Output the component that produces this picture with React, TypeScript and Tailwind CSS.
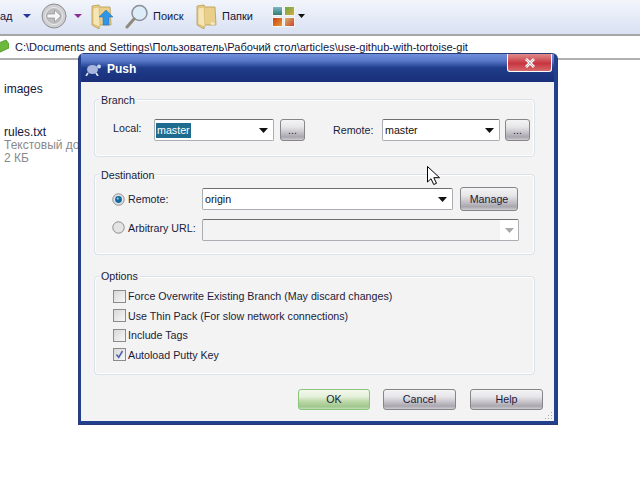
import React from "react";

const btn = "flex items-center justify-center rounded-[3px] border border-[#85858a] bg-[linear-gradient(#f4f4f5_0%,#e6e5e8_35%,#c9c7cd_60%,#a9a6ae_85%,#cfced2_100%)] text-[10.7px] text-[#1b1b3a]";

function Combo({ text, selected, className }: { text: string; selected?: boolean; className: string }) {
  return (
    <div className={`flex h-[22px] items-center justify-between rounded-[2px] border border-[#abadb3] border-t-[#6f6f6f] bg-white pl-[1px] pr-[3px] ${className}`}>
      <span className={selected ? "mt-[1px] bg-[#1f6a8f] px-[1px] leading-[15px] text-white" : "mt-[1px] px-[1px] text-[#111]"}>{text}</span>
      <svg width="9" height="5" viewBox="0 0 9 5" className="mr-[2px]"><path d="M0 0h9L4.5 5z" fill="#111" /></svg>
    </div>
  );
}

function Group({ title, className, legendClass, children }: { title: string; className: string; legendClass: string; children: React.ReactNode }) {
  return (
    <div className={`relative ml-[13px] w-[441px] rounded-[4px] border border-[#dbe1e8] shadow-[inset_0_0_0_1px_#fff] ${className}`}>
      <span className={`absolute left-[4px] bg-[#f3f3f3] px-[2px] leading-[14px] text-[#1b1b3a] ${legendClass}`}>{title}</span>
      {children}
    </div>
  );
}

function Radio({ on }: { on?: boolean }) {
  return (
    <svg width="13" height="13" viewBox="0 0 13 13" className="shrink-0">
      <circle cx="6.5" cy="6.5" r="5.7" fill="#e4e4e4" stroke="#8b8b8b" />
      {on && <circle cx="6.5" cy="6.5" r="3.4" fill="#146a9f" />}
      {on && <circle cx="5.8" cy="5.6" r="1.1" fill="#8cc8ea" />}
    </svg>
  );
}

function Check({ label, on }: { label: string; on?: boolean }) {
  return (
    <div className="flex h-[13px] items-center gap-[2px]">
      <div className="flex h-[13px] w-[13px] shrink-0 items-center justify-center border border-[#8b8b8b] bg-[linear-gradient(135deg,#d8d8d8,#f7f7f7)]">
        {on && (
          <svg width="9" height="9" viewBox="0 0 9 9"><path d="M1.5 4.5 L3.7 7.5 L7.5 1" fill="none" stroke="#4a60ac" strokeWidth="1.5" /></svg>
        )}
      </div>
      <span className="whitespace-nowrap text-[#1b1b3a]">{label}</span>
    </div>
  );
}

function Folder({ arrow }: { arrow?: boolean }) {
  return (
    <svg width="22" height="25" viewBox="0 0 22 25">
      <path d="M1 2 L8 1 L9 3 L19 3 L20 21 L8 21 L8 25 L1 21 Z" fill="#e9cf8a" stroke="#b99a4f" strokeWidth="0.8" />
      <path d="M2 4 L8 3 L9 23 L2 20 Z" fill="#f6e6b6" stroke="#c7a860" strokeWidth="0.5" />
      {arrow ? (
        <path d="M15 6 L22 13 L18 13 L18 21 L12 21 L12 13 L8 13 Z" fill="#2f95e6" stroke="#1b6fc0" strokeWidth="0.5" />
      ) : (
        <path d="M16 21v-3M18 21v-2" stroke="#fff" strokeWidth="1" />
      )}
    </svg>
  );
}

export default function App() {
  return (
    <div className="relative h-[480px] w-[640px] overflow-hidden bg-white font-['Liberation_Sans',sans-serif] text-[10.7px] text-[#111]">
      <div className="flex h-[36px] items-center border-b-2 border-[#a6a6a6] bg-[linear-gradient(#f2f5fb,#d9e1f3)] pb-[2px] text-[#14143a]">
        <span className="w-[23px] text-[11px]">ад</span>
        <svg width="8" height="4" viewBox="0 0 8 4"><path d="M0 0h8L4 4z" fill="#23359e" /></svg>
        <svg width="26" height="26" viewBox="0 0 26 26" className="ml-[10px]">
          <circle cx="13" cy="13" r="12" fill="#cfcfd1" stroke="#8f8f93" />
          <circle cx="13" cy="13" r="8.5" fill="#bdbdc0" stroke="#ececed" />
          <path d="M6 11h7.5V7l6.5 6-6.5 6v-4H6z" fill="#f6f6f6" stroke="#8f8f93" strokeWidth="0.7" />
        </svg>
        <svg width="8" height="4" viewBox="0 0 8 4" className="ml-[7px]"><path d="M0 0h8L4 4z" fill="#8b2f93" /></svg>
        <div className="ml-[9px]"><Folder arrow /></div>
        <svg width="24" height="25" viewBox="0 0 24 25" className="ml-[12px]">
          <circle cx="14.5" cy="9" r="7.5" fill="#dcecf8" stroke="#8a8f99" strokeWidth="1.5" />
          <path d="M9 15 L2 23" stroke="#8f8a7c" strokeWidth="3" strokeLinecap="round" />
        </svg>
        <span className="ml-[4px] w-[32px] text-[11px]">Поиск</span>
        <div className="ml-[11px]"><Folder /></div>
        <span className="ml-[4px] w-[32px] text-[11px]">Папки</span>
        <div className="ml-[18px] grid grid-cols-2 gap-[1px]">
          <div className="h-[10px] w-[11px] border border-[#f5f5f5] bg-[linear-gradient(#7fb6c8,#2f7f70)]" />
          <div className="h-[10px] w-[11px] border border-[#f5f5f5] bg-[linear-gradient(135deg,#5fae4a,#e0a63a)]" />
          <div className="h-[10px] w-[11px] border border-[#f5f5f5] bg-[linear-gradient(135deg,#c83a1e,#e89a2a)]" />
          <div className="h-[10px] w-[11px] border border-[#f5f5f5] bg-[linear-gradient(135deg,#d9b26a,#c8452e)]" />
        </div>
        <svg width="7" height="4" viewBox="0 0 7 4" className="ml-[3px]"><path d="M0 0h7L3.5 4z" fill="#111" /></svg>
      </div>
      <div className="flex h-[24px] items-center gap-[6px] border-b-2 border-[#b0b0b0]">
        <svg width="9" height="16" viewBox="0 0 9 16"><path d="M-4 5 L6 1 L9 5 L9 9 L-4 15 Z" fill="#6cb83c" stroke="#3f8a2a" strokeWidth="0.7" /></svg>
        <span className="whitespace-nowrap text-[11.05px] text-[#14143a]">C:\Documents and Settings\Пользователь\Рабочий стол\articles\use-github-with-tortoise-git</span>
      </div>
      <div className="pl-[4px] pt-[23px] text-[12px] leading-[13px] text-[#14143a]">
        <div>images</div>
        <div className="mt-[30px]">rules.txt</div>
        <div className="whitespace-nowrap text-[#8a8a8a]">Текстовый документ</div>
        <div className="text-[#8a8a8a]">2 КБ</div>
      </div>

      <div className="absolute left-[79px] top-[54px] flex h-[370px] w-[478px] flex-col rounded-t-[5px] border-x-[3px] border-b-[3px] border-[#23408f] border-l-[2px] bg-[#f3f3f3] shadow-[0_0_0_1px_#2a3c78]">
        <div className="flex h-[28px] shrink-0 items-center bg-[linear-gradient(#6f8fdb_0%,#5876c8_25%,#1f3c8a_50%,#1a2f7a_100%)] pl-[4px] text-white">
          <svg width="17" height="13" viewBox="0 0 17 13" className="mt-[2px]">
            <ellipse cx="7.5" cy="6.5" rx="5.5" ry="4.5" fill="#a9b6dd" />
            <circle cx="14" cy="3.5" r="2" fill="#c9d3ee" />
            <path d="M3 10 L1 13 M11 10 L13 13" stroke="#e6eaf7" strokeWidth="1.6" />
          </svg>
          <span className="ml-[5px] mt-[2px] text-[12px] font-bold">Push</span>
          <div className="ml-auto mr-[2px] flex h-[18px] w-[45px] self-start items-center justify-center rounded-b-[3px] border-x border-b border-white bg-[linear-gradient(#e08c8c,#c8353f_55%,#d5696c)]">
            <svg width="12" height="10" viewBox="0 0 12 10"><path d="M2 1 L10 9 M10 1 L2 9" stroke="#fff" strokeWidth="2.8" /><path d="M2 1 L10 9 M10 1 L2 9" stroke="#9c8a96" strokeWidth="0.6" /></svg>
          </div>
        </div>

        <Group title="Branch" legendClass="top-[-7px]" className="mt-[17px] h-[58px] shrink-0">
          <div className="flex items-center pl-[18px] pt-[19px]">
            <span className="mb-[4px] w-[41px] text-[#1b1b3a]">Local:</span>
            <Combo text="master" selected className="w-[120px]" />
            <div className={`${btn} ml-[6px] h-[22px] w-[25px]`}>...</div>
            <span className="ml-[28px] w-[49px] text-[#1b1b3a]">Remote:</span>
            <Combo text="master" className="w-[118px]" />
            <div className={`${btn} ml-[5px] h-[22px] w-[25px]`}>...</div>
          </div>
        </Group>

        <Group title="Destination" legendClass="top-[-7px]" className="mt-[17px] h-[81px] shrink-0">
          <div className="flex items-center pl-[17px] pt-[12px]">
            <Radio on />
            <span className="ml-[3px] w-[74px] text-[#1b1b3a]">Remote:</span>
            <Combo text="origin" className="w-[251px]" />
            <div className={`${btn} ml-[7px] h-[24px] w-[58px]`}>Manage</div>
          </div>
          <div className="flex items-center pl-[17px] pt-[8px]">
            <div className="mb-[4px] flex items-center">
              <Radio />
              <span className="ml-[3px] w-[74px] whitespace-nowrap text-[#1b1b3a]">Arbitrary URL:</span>
            </div>
            <div className="flex h-[22px] w-[317px] items-center justify-end rounded-[2px] border border-[#abadb3] border-t-[#6f6f6f] bg-[#f3f3f3]">
              <div className="flex h-[20px] w-[18px] items-center justify-center bg-white">
                <svg width="9" height="5" viewBox="0 0 9 5"><path d="M0 0h9L4.5 5z" fill="#a8a8a8" /></svg>
              </div>
            </div>
          </div>
        </Group>

        <Group title="Options" legendClass="top-[-8px]" className="mt-[21px] h-[99px] shrink-0">
          <div className="flex flex-col gap-[6.6px] pl-[18px] pt-[12.6px]">
            <Check label="Force Overwrite Existing Branch (May discard changes)" />
            <Check label="Use Thin Pack (For slow network connections)" />
            <Check label="Include Tags" />
            <Check label="Autoload Putty Key" on />
          </div>
        </Group>

        <div className="ml-[217px] mt-[14px] flex">
          <div className="flex h-[21px] w-[72px] items-center justify-center rounded-[3px] border border-[#8cc47e] bg-[linear-gradient(#f3f9ee_0%,#e4f0d9_35%,#bdd8a9_60%,#9fc78d_88%,#c2dfb4_100%)] text-[#1b1b3a]">OK</div>
          <div className={`${btn} ml-[13px] h-[21px] w-[73px]`}>Cancel</div>
          <div className={`${btn} ml-[14px] h-[21px] w-[73px]`}>Help</div>
        </div>
        <svg width="9" height="9" viewBox="0 0 9 9" className="absolute bottom-[1px] right-[1px]">
          <path d="M7 1h1v1H7zM7 4h1v1H7zM4 4h1v1H4zM7 7h1v1H7zM4 7h1v1H4zM1 7h1v1H1z" fill="#a9a9a9" />
        </svg>
      </div>

      <svg width="14" height="20" viewBox="0 0 14 20" className="absolute left-[427px] top-[166px]">
        <path d="M0.5 0.5 L0.5 16 L4 12.7 L6.7 18.5 L9.5 17.3 L6.8 11.7 L12.5 11.7 Z" fill="#fff" stroke="#000" strokeWidth="1" />
      </svg>
    </div>
  );
}
